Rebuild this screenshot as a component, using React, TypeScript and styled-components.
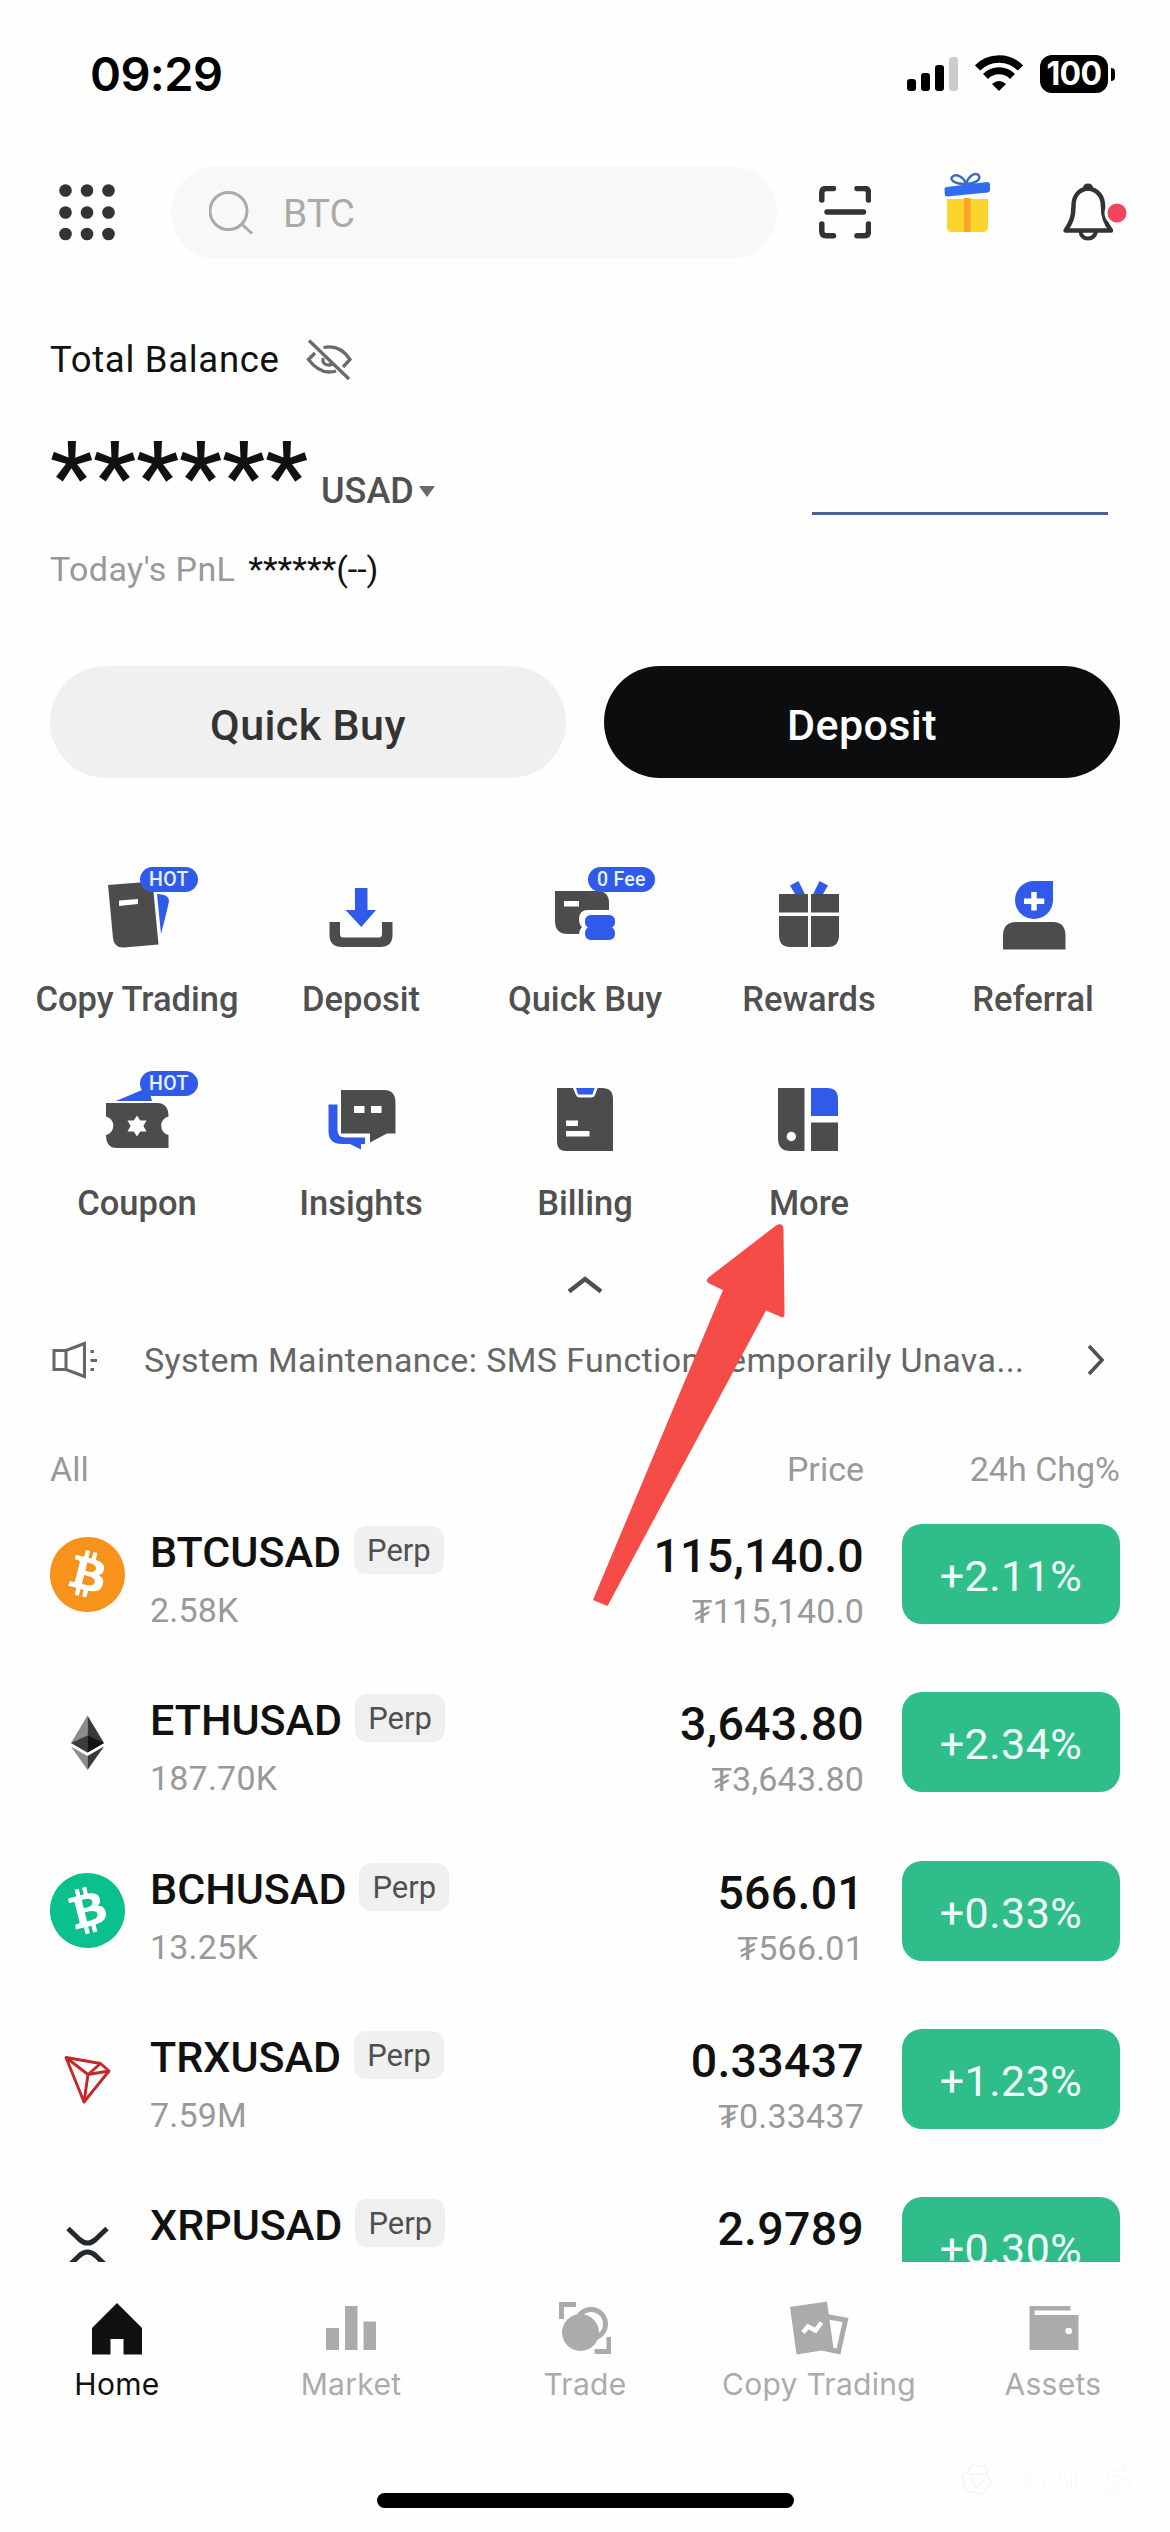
import React from "react";
import styled, { createGlobalStyle } from "styled-components";
import { SiBitcoin } from "react-icons/si";

const DARK = "#4c4c4c";
const BLUE = "#305ae9";
const MUTED = "#ababab";

const GlobalStyle = createGlobalStyle`
  * { box-sizing: border-box; }
  body {
    margin: 0;
    background: #fefefe;
    font-family: Roboto, "Liberation Sans", sans-serif;
    color: #111;
  }
  svg { display: block; flex: none; }
`;

const Screen = styled.div`
  position: relative;
  width: 1170px;
  height: 2532px;
  overflow: hidden;
  display: flex;
  flex-direction: column;
  background: #fefefe;
`;

/* ---------- status bar ---------- */
const StatusBar = styled.div`
  flex: none;
  height: 166px;
  padding: 44px 55px 62px 90px;
  display: flex;
  align-items: center;
  justify-content: space-between;
  font-family: Inter, "Liberation Sans", sans-serif;
`;
const Clock = styled.span`
  font-size: 47px;
  font-weight: 600;
  line-height: 60px;
  letter-spacing: -0.6px;
  color: #000;
`;
const StatusIcons = styled.div`
  display: flex;
  align-items: center;
`;
const WifiSlot = styled.div`
  margin: 0 17px;
`;
const Battery = styled.div`
  width: 68px;
  height: 38px;
  border-radius: 12px;
  background: #000;
  color: #fff;
  font-size: 32px;
  font-weight: 700;
  line-height: 38px;
  letter-spacing: -0.6px;
  text-align: center;
`;
const BatteryNub = styled.div`
  width: 4px;
  height: 13px;
  margin-left: 3px;
  border-radius: 0 4px 4px 0;
  background: #000;
`;

/* ---------- header ---------- */
const Header = styled.header`
  flex: none;
  height: 93px;
  padding-left: 59px;
  display: flex;
  align-items: center;
`;
const SearchBox = styled.div`
  width: 606px;
  height: 93px;
  margin: 0 42px 0 56px;
  padding: 2px 0 0 38px;
  border-radius: 47px;
  background: #f8f8f8;
  display: flex;
  align-items: center;
  gap: 28px;
  font-size: 39px;
  color: #aaa;
`;
const GiftSlot = styled.div`
  margin: 0 68px 0 73px;
`;

/* ---------- balance ---------- */
const Balance = styled.section`
  flex: none;
  height: 407px;
  padding: 76px 62px 0 50px;
  display: flex;
  justify-content: space-between;
`;
const BalanceTitle = styled.div`
  height: 50px;
  display: flex;
  align-items: center;
  gap: 26px;
  font-size: 36.5px;
  line-height: 50px;
  letter-spacing: 0.7px;
`;
const Amount = styled.div`
  height: 90px;
  margin-top: 43px;
  display: flex;
  align-items: flex-start;
`;
const Masked = styled.span`
  padding-top: 4px;
  font-size: 97px;
  font-weight: 500;
  line-height: 90px;
`;
const Currency = styled.span`
  margin: 43px 0 0 13px;
  display: flex;
  align-items: center;
  gap: 5px;
  font-size: 36px;
  font-weight: 500;
  line-height: 40px;
  color: #505050;
`;
const Pnl = styled.div`
  margin-top: 29px;
  font-size: 34px;
  line-height: 44px;
`;
const PnlLabel = styled.span`
  margin-right: 13px;
  letter-spacing: 0.4px;
  color: #999;
`;
const Sparkline = styled.div`
  width: 296px;
  height: 3px;
  margin-top: 177px;
  background: #4a6595;
`;

const Actions = styled.div`
  flex: none;
  display: flex;
  gap: 38px;
  padding: 0 50px;
`;
const ActionButton = styled.button<{ $primary?: boolean }>`
  flex: 1;
  height: 112px;
  border: 0;
  border-radius: 56px;
  padding: 5px 0 0;
  font: 500 43px/60px Roboto, sans-serif;
  letter-spacing: 0.4px;
  color: ${(p) => (p.$primary ? "#fff" : "#333")};
  background: ${(p) => (p.$primary ? "#0b0d0e" : "#f0f0f0")};
`;

/* ---------- shortcuts ---------- */
const Shortcuts = styled.section`
  flex: none;
  margin-top: 82px;
  padding: 0 25px;
  display: grid;
  grid-template-columns: repeat(5, 224px);
  grid-auto-rows: 204px;
`;
const Tile = styled.div`
  position: relative;
  display: flex;
  flex-direction: column;
  align-items: center;
  gap: 19px;
  font-size: 34.5px;
  font-weight: 500;
  line-height: 40px;
  color: #505050;
  white-space: nowrap;
`;
const TileBadge = styled.span`
  position: absolute;
  left: 115px;
  top: 7px;
  height: 25px;
  padding: 0 9px;
  border-radius: 13px;
  background: ${BLUE};
  color: #e8f2ff;
  font-size: 19.5px;
  line-height: 26px;
  letter-spacing: 0.3px;
`;
const Collapse = styled.div`
  flex: none;
  height: 42px;
  padding-bottom: 8px;
  display: flex;
  align-items: center;
  justify-content: center;
`;

/* ---------- notice ---------- */
const Notice = styled.div`
  flex: none;
  height: 100px;
  padding: 0 66px 0 52px;
  display: flex;
  align-items: center;
`;
const NoticeText = styled.span`
  flex: 1;
  margin-left: 46px;
  font-size: 34px;
  line-height: 44px;
  letter-spacing: 0.4px;
  color: #666;
  white-space: nowrap;
`;

/* ---------- market list ---------- */
const Columns = styled.div`
  flex: none;
  height: 80px;
  padding: 37px 50px 0;
  display: grid;
  grid-template-columns: 1fr 300px 256px;
  font-size: 34px;
  line-height: 44px;
  color: #999;
`;
const RightCell = styled.span`
  text-align: right;
`;
const List = styled.section`
  flex: none;
  position: relative;
  height: 772px;
  overflow: hidden;
`;
const ListFade = styled.div`
  position: absolute;
  left: 0;
  right: 0;
  bottom: 0;
  height: 20px;
  background: linear-gradient(rgba(0, 0, 0, 0), rgba(0, 0, 0, 0.012));
`;
const Row = styled.div`
  height: 168.3px;
  padding: 0 50px;
  display: flex;
  align-items: center;
`;
const Coin = styled.div`
  width: 75px;
  height: 75px;
  flex: none;
  display: flex;
  align-items: center;
  justify-content: center;
`;
const CoinDisc = styled(Coin)<{ $color: string; $turn: number }>`
  border-radius: 50%;
  color: ${(p) => p.$color};
  background: radial-gradient(#fff 66%, transparent 67%);
  transform: rotate(${(p) => p.$turn}deg);
`;
const Pair = styled.div`
  flex: 1;
  margin-left: 25px;
  padding-top: 8px;
`;
const PairName = styled.div`
  height: 48px;
  display: flex;
  align-items: center;
  gap: 13px;
`;
const Symbol = styled.span`
  padding-top: 4px;
  font-size: 43px;
  font-weight: 500;
  line-height: 48px;
`;
const PerpTag = styled.span`
  height: 48px;
  padding: 0 13px;
  border-radius: 12px;
  background: #f0f0f0;
  font-size: 31px;
  line-height: 50px;
  color: #505050;
`;
const Secondary = styled.div`
  height: 40px;
  margin-top: 16px;
  font-size: 34px;
  line-height: 40px;
  letter-spacing: 0.2px;
  color: #999;
`;
const Quote = styled.div`
  padding-top: 12px;
  text-align: right;
`;
const Price = styled.div`
  font-size: 46.5px;
  font-weight: 500;
  line-height: 54px;
  letter-spacing: 0.25px;
  margin-bottom: -8px;
`;
const Change = styled.div`
  width: 218px;
  height: 100px;
  margin-left: 38px;
  padding-top: 5px;
  border-radius: 20px;
  background: #2fbd89;
  color: #f2fffa;
  font-size: 43px;
  line-height: 95px;
  letter-spacing: 0.5px;
  text-align: center;
`;

/* ---------- tab bar ---------- */
const TabBar = styled.nav`
  flex: none;
  height: 270px;
  position: relative;
  background: #fefefe;
`;
const Tabs = styled.div`
  height: 231px;
  padding-top: 33px;
  display: grid;
  grid-template-columns: repeat(5, 234px);
`;
const Tab = styled.div<{ $active?: boolean }>`
  display: flex;
  flex-direction: column;
  align-items: center;
  gap: 3px;
  font-family: Inter, "Liberation Sans", sans-serif;
  font-size: 30px;
  line-height: 40px;
  letter-spacing: 0.3px;
  color: ${(p) => (p.$active ? "#111" : MUTED)};
`;
const HomeIndicator = styled.div`
  width: 417px;
  height: 15px;
  margin: 0 auto;
  border-radius: 8px;
  background: #000;
`;
const Watermark = styled.div`
  position: absolute;
  right: 37px;
  bottom: 35px;
  display: flex;
  align-items: center;
  gap: 5px;
  font: 700 27.5px/36px "Noto Sans CJK SC", sans-serif;
  color: #fff;
  text-shadow: 0 0 1px #e6e6e6;
`;
const Pointer = styled.svg`
  position: absolute;
  left: 580px;
  top: 1215px;
`;

/* ---------- icons ---------- */
const shortcuts: { label: string; badge?: string; box: string; art: React.ReactNode }[] = [
  {
    label: "Copy Trading",
    badge: "HOT",
    box: "81 860 112 100",
    art: (
      <>
        <path d="M108 885L152.500 881.500L158.500 944.500L124 947.500Q114 948 113 938Z" fill={DARK} />
        <path d="M119 900.500L138 899V904L119 906Z" fill="#fff" />
        <path d="M157 894Q169 894 169 901Q168 907 161 934Z" fill={BLUE} />
      </>
    ),
  },
  {
    label: "Deposit",
    box: "305 860 112 100",
    art: (
      <>
        <path d="M355 888H367.500V910H376L361.300 927L345.500 910H355Z" fill={BLUE} />
        <path d="M329.500 922H340V934Q340 937.500 343 937.500H379Q382 937.500 382 934V922H392.500V935Q392.500 947 380 947H342Q329.500 947 329.500 935Z" fill={DARK} />
      </>
    ),
  },
  {
    label: "Quick Buy",
    badge: "0 Fee",
    box: "529 860 112 100",
    art: (
      <>
        <path d="M555 891H597Q609 891 609 903V910H588Q579 910 579 919Q579 924 582 927Q579 930 579 934H568Q555 934 555 921Z" fill={DARK} />
        <path d="M564 901H579V906.500H564Z" fill="#fff" />
        <path d="M591 915H609Q615 915 615 921.500Q615 926 612 927.500Q615 929 615 933.500Q615 940 609 940H591Q585 940 585 933.500Q585 929 588 927.500Q585 926 585 921.500Q585 915 591 915Z" fill={BLUE} />
      </>
    ),
  },
  {
    label: "Rewards",
    box: "753 860 112 100",
    art: (
      <>
        <path d="M790 885.500L798.500 881L804.800 894H795ZM828 885.500L819.500 881L813.200 894H823Z" fill={BLUE} />
        <path d="M779 894H808V912.500H779ZM811 894H839V912.500H811ZM779 916H808V947H790Q779 947 779 935ZM811 916H839V935Q839 947 828 947H811Z" fill={DARK} />
      </>
    ),
  },
  {
    label: "Referral",
    box: "977 860 112 100",
    art: (
      <>
        <path d="M1034 881H1053V900A19 19 0 1 1 1034 881Z" fill={BLUE} />
        <path d="M1034 892V910.500M1024 901.300H1044.300" stroke="#fff" strokeWidth="5.500" />
        <path d="M1003 949.500V936Q1003 922 1016 922H1053Q1065.500 922 1065.500 936V949.500Z" fill={DARK} />
      </>
    ),
  },
  {
    label: "Coupon",
    badge: "HOT",
    box: "81 1064 112 100",
    art: (
      <>
        <path d="M116 1101L142 1090L149 1090L152 1101Z" fill={BLUE} />
        <path d="M106 1103H157Q168.500 1103 168.500 1116.500A9.500 9.500 0 0 0 168.500 1135V1148H117Q106 1148 106 1135A9.500 9.500 0 0 0 106 1116.500Z" fill={DARK} />
        <path d="M137 1115.500L140.200 1120.500H146.500L143.400 1126L146.500 1131.500H140.200L137 1136.500L133.800 1131.500H127.500L130.600 1126L127.500 1120.500H133.800Z" fill="#fff" />
      </>
    ),
  },
  {
    label: "Insights",
    box: "305 1064 112 100",
    art: (
      <>
        <path d="M341 1090H384Q395.500 1090 395.500 1103V1133.500H387L370 1142.500V1133.500H341Z" fill={DARK} />
        <path d="M354 1106H364.500V1113H354ZM371 1106H381.500V1113H371Z" fill="#fff" />
        <path d="M328.500 1104.500H337.500V1130Q337.500 1137.500 345 1137.500H365V1144H361V1149.500L350 1144H342Q328.500 1144 328.500 1131Z" fill={BLUE} />
      </>
    ),
  },
  {
    label: "Billing",
    box: "529 1064 112 100",
    art: (
      <>
        <path d="M557 1088H602Q613 1088 613 1099V1151H566Q557 1151 557 1142Z" fill={DARK} />
        <path d="M572.500 1087H598L595 1095Q594 1097.500 591 1097.500H580Q577 1097.500 576 1095Z" fill="#fff" />
        <path d="M576 1088H594.500L592.500 1094.500H578Z" fill={BLUE} />
        <path d="M566 1120.500H578V1126H566ZM566 1131H589.500V1136.500H566Z" fill="#fff" />
      </>
    ),
  },
  {
    label: "More",
    box: "753 1064 112 100",
    art: (
      <>
        <path d="M778 1088H804.500V1151H790Q778 1151 778 1138Z" fill={DARK} />
        <circle cx="791.300" cy="1136.500" r="4.700" fill="#fff" />
        <path d="M811 1088H827Q838 1088 838 1099V1116H811Z" fill={BLUE} />
        <path d="M811 1122.500H838V1151H811Z" fill={DARK} />
      </>
    ),
  },
];

const EthLogo = () => (
  <svg width="75" height="75" viewBox="50 1704.500 75 75">
    <path d="M87.500 1715V1752L71 1742.500Z" fill="#8c8c8c" />
    <path d="M87.500 1715L104 1742.500L87.500 1752Z" fill="#393939" />
    <path d="M87.500 1735V1752L71 1742.500Z" fill="#3c3c3b" />
    <path d="M87.500 1735L104 1742.500L87.500 1752Z" fill="#141414" />
    <path d="M71 1746L87.500 1755.500V1769.500Z" fill="#8c8c8c" />
    <path d="M104 1746L87.500 1755.500V1769.500Z" fill="#393939" />
  </svg>
);
const TrxLogo = () => (
  <svg width="75" height="75" viewBox="50 2041 75 75" fill="none" stroke="#c4282a" strokeWidth="2.900" strokeLinejoin="round">
    <path d="M66 2056.500L100.500 2062.500L109 2070L84 2101Z" />
    <path d="M66 2056.500L88 2073.500L84 2101M88 2073.500L109 2070M88 2073.500L100.500 2062.500" />
  </svg>
);
const XrpLogo = () => (
  <svg width="75" height="75" viewBox="50 2209.500 75 75" fill="none" stroke="#23292f" strokeWidth="5">
    <path d="M68 2228L79.500 2239Q87.500 2246 95.500 2239L107 2228" />
    <path d="M68 2266L79.500 2255Q87.500 2248 95.500 2255L107 2266" />
  </svg>
);

interface Market {
  symbol: string;
  volume?: string;
  price: string;
  sub?: string;
  change: string;
  logo: React.ReactNode;
}
const markets: Market[] = [
  { symbol: "BTCUSAD", volume: "2.58K", price: "115,140.0", sub: "₮115,140.0", change: "+2.11%", logo: <CoinDisc $color="#f7931a" $turn={0}><SiBitcoin size={75} /></CoinDisc> },
  { symbol: "ETHUSAD", volume: "187.70K", price: "3,643.80", sub: "₮3,643.80", change: "+2.34%", logo: <Coin><EthLogo /></Coin> },
  { symbol: "BCHUSAD", volume: "13.25K", price: "566.01", sub: "₮566.01", change: "+0.33%", logo: <CoinDisc $color="#0ac18e" $turn={-28}><SiBitcoin size={75} /></CoinDisc> },
  { symbol: "TRXUSAD", volume: "7.59M", price: "0.33437", sub: "₮0.33437", change: "+1.23%", logo: <Coin><TrxLogo /></Coin> },
  { symbol: "XRPUSAD", price: "2.9789", change: "+0.30%", logo: <Coin><XrpLogo /></Coin> },
];

const tabs = [
  { label: "Home", x: 87, art: <path d="M117 2303L142 2328V2354.500H123.500V2339H110.500V2354.500H92V2328Z" fill="#111" /> },
  { label: "Market", x: 321, art: <path d="M326 2328H339V2350H326ZM345 2306H357.500V2350H345ZM363.500 2321.500H376V2350H363.500Z" fill={MUTED} /> },
  {
    label: "Trade",
    x: 555,
    art: (
      <>
        <path d="M559 2302H576V2307H564V2319H559ZM611 2354H594.500V2349H606.500V2337H611Z" fill={MUTED} />
        <circle cx="591" cy="2324" r="14.500" fill="none" stroke={MUTED} strokeWidth="5" />
        <circle cx="580.500" cy="2332.500" r="18.500" fill={MUTED} />
      </>
    ),
  },
  {
    label: "Copy Trading",
    x: 789,
    art: (
      <>
        <path d="M826 2316.500L845.500 2320L838.500 2351.500L822 2348" fill="none" stroke={MUTED} strokeWidth="5" />
        <path d="M790 2307L827 2301.500L833.500 2348.500L822 2350.500L796.500 2354.500Z" fill={MUTED} />
        <path d="M803 2332.500L808 2326.500L815.500 2330.500L821.500 2322.500" fill="none" stroke="#fefefe" strokeWidth="4.500" />
      </>
    ),
  },
  {
    label: "Assets",
    x: 1023,
    art: (
      <>
        <path d="M1029.500 2306H1070.500V2310.500H1034.500V2315H1078.500V2350H1029.500Z" fill={MUTED} />
        <circle cx="1068.700" cy="2331" r="3.300" fill="#fff" />
      </>
    ),
  },
];

export default function App() {
  return (
    <>
      <GlobalStyle />
      <Screen>
        <StatusBar>
          <Clock>09:29</Clock>
          <StatusIcons>
            <svg width="51" height="38" viewBox="907 55 51 38">
              <rect x="907" y="79" width="9" height="12" rx="3" />
              <rect x="921" y="73" width="9" height="18" rx="3" />
              <rect x="935" y="65" width="9" height="26" rx="3" />
              <rect x="949" y="57" width="9" height="34" rx="3" fill="#ccc" />
            </svg>
            <WifiSlot>
              <svg width="48" height="38" viewBox="975 55 48 38" fill="none" stroke="#000">
                <path d="M977.500 68A30 30 0 0 1 1020.500 68" strokeWidth="7.500" />
                <path d="M985.500 76.500A19 19 0 0 1 1012.500 76.500" strokeWidth="7" />
                <path d="M992 84Q999 78 1006 84L999 91Z" fill="#000" stroke="none" />
              </svg>
            </WifiSlot>
            <Battery>100</Battery>
            <BatteryNub />
          </StatusIcons>
        </StatusBar>

        <Header>
          <svg width="56" height="57" viewBox="0 0 56 57" fill="#333">
            {[6.5, 28.5, 50].map((y) => [6.5, 28, 49.5].map((x) => <circle key={`${x}-${y}`} cx={x} cy={y} r="6.300" />))}
          </svg>
          <SearchBox>
            <svg width="46" height="46" viewBox="209 189 46 46" fill="none" stroke="#aaa" strokeWidth="3">
              <circle cx="228.500" cy="209" r="18.500" />
              <path d="M241.500 222L252 231.500" />
            </svg>
            BTC
          </SearchBox>
          <svg width="52" height="53" viewBox="819 186 52 53" fill="none" stroke="#333" strokeWidth="5.500" strokeLinecap="round">
            <path d="M821.800 200V193Q821.800 188.500 826 188.500H833.500M857 188.500H864.500Q868.500 188.500 868.500 193V200M868.500 224V231Q868.500 235.800 864.500 235.800H857M833.500 235.800H826Q821.800 235.800 821.800 231V224M827 212H863.500" />
          </svg>
          <GiftSlot>
            <svg width="50" height="93" viewBox="944 166 50 93">
              <path d="M966 184C954 184 950 180 952 177C956 173 964 177 966 184C968 177 974 172 978.500 175C982 180 974 184 966 184Z" fill="none" stroke="#3c6fb8" strokeWidth="2.400" />
              <path d="M944.500 189Q944.500 187 947 187L987 182Q989.500 182 990 184V190Q990 192 987.500 192.500L947 196.500Q944.800 196.500 944.800 194Z" fill="#326af0" />
              <path d="M947 199H988V227Q988 232 983 232H952Q947 232 947 227Z" fill="#fcd42c" />
              <path d="M964 198H970.500V232H964Z" fill="#f9a62b" />
            </svg>
          </GiftSlot>
          <svg width="66" height="93" viewBox="1062 166 66 93">
            <path d="M1088 188.500C1078 189.500 1073.500 197 1073.500 206C1073.500 217 1071 223 1065.500 230.500H1111C1105.500 223 1103 217 1103 206C1103 197 1098 189.500 1088 188.500Z" fill="none" stroke="#333" strokeWidth="4.500" strokeLinejoin="round" />
            <path d="M1083 188.500Q1083 183.500 1088 183.500Q1093 183.500 1093 188.500Z" fill="#333" />
            <path d="M1080.500 231.500Q1081.500 238.500 1088 238.500Q1094.500 238.500 1096 231.500" fill="none" stroke="#333" strokeWidth="4" />
            <circle cx="1117" cy="213" r="12.500" fill="#fefefe" />
            <circle cx="1117" cy="213" r="9.500" fill="#f3435d" />
          </svg>
        </Header>

        <Balance>
          <div>
            <BalanceTitle>
              Total Balance
              <svg width="46" height="44" viewBox="306 337 46 44" fill="none" stroke="#6a6a6a" strokeWidth="3.300">
                <path d="M309 339.500L349 378" />
                <path d="M315 352L308.500 358.500Q318 371 329 371Q333 371 336 370" />
                <path d="M323.500 346.500Q340 343 350 358.500L343 366" />
                <path d="M323 357Q322 364 329 364Q332 364 333 362" />
              </svg>
            </BalanceTitle>
            <Amount>
              <Masked>******</Masked>
              <Currency>
                USAD
                <svg width="16" height="11" viewBox="0 0 16 11">
                  <path d="M0 0H16L8 11Z" fill="#6a6a6a" />
                </svg>
              </Currency>
            </Amount>
            <Pnl>
              <PnlLabel>Today's PnL</PnlLabel>
              <span>******(--)</span>
            </Pnl>
          </div>
          <Sparkline />
        </Balance>

        <Actions>
          <ActionButton>Quick Buy</ActionButton>
          <ActionButton $primary>Deposit</ActionButton>
        </Actions>

        <Shortcuts>
          {shortcuts.map((s) => (
            <Tile key={s.label}>
              <svg width="112" height="100" viewBox={s.box}>{s.art}</svg>
              {s.label}
              {s.badge && <TileBadge>{s.badge}</TileBadge>}
            </Tile>
          ))}
        </Shortcuts>

        <Collapse>
          <svg width="36" height="18" viewBox="0 0 36 18">
            <path d="M2 15.500L18 3L34 15.500" fill="none" stroke="#505050" strokeWidth="4.500" />
          </svg>
        </Collapse>

        <Notice>
          <svg width="46" height="38" viewBox="52 1341 46 38" fill="none" stroke="#666" strokeWidth="3">
            <path d="M54 1350.500H66L84.500 1343.500V1376.500L66 1369.500H54ZM66 1350.500V1369.500M90.500 1351.500H94M90.500 1360.500H97M90.500 1369.500H94" />
          </svg>
          <NoticeText>System Maintenance: SMS Function Temporarily Unava...</NoticeText>
          <svg width="17" height="32" viewBox="0 0 17 32">
            <path d="M2 2L15 16L2 30" fill="none" stroke="#505050" strokeWidth="3.500" />
          </svg>
        </Notice>

        <Columns>
          <span>All</span>
          <RightCell>Price</RightCell>
          <RightCell>24h Chg%</RightCell>
        </Columns>
        <List>
          {markets.map((m) => (
            <Row key={m.symbol}>
              {m.logo}
              <Pair>
                <PairName>
                  <Symbol>{m.symbol}</Symbol>
                  <PerpTag>Perp</PerpTag>
                </PairName>
                <Secondary>{m.volume}</Secondary>
              </Pair>
              <Quote>
                <Price>{m.price}</Price>
                <Secondary>{m.sub}</Secondary>
              </Quote>
              <Change>{m.change}</Change>
            </Row>
          ))}
          <ListFade />
        </List>

        <TabBar>
          <Tabs>
            {tabs.map((t, i) => (
              <Tab key={t.label} $active={i === 0}>
                <svg width="60" height="66" viewBox={`${t.x} 2295 60 66`}>{t.art}</svg>
                {t.label}
              </Tab>
            ))}
          </Tabs>
          <HomeIndicator />
          <Watermark>
            <svg width="30" height="32" viewBox="0 0 30 32" fill="none" stroke="#f0f0f0" strokeWidth="1">
              <path d="M9 4Q12 0 16 3H23Q28 5 26 10L29 18Q31 22 26 24L22 30Q18 33 14 29L5 28Q1 25 4 20L1 14Q1 9 7 9ZM8 11H26L16 25Z" />
            </svg>
            千问AI生成
          </Watermark>
        </TabBar>

        <Pointer width="215" height="400" viewBox="580 1215 215 400">
          <path d="M776 1225.500Q783 1222 783.500 1229L784.500 1315Q784 1319 780 1316.500L766 1310.500L607.500 1606L593 1600L723 1290L709 1283.500Q705 1281 708.500 1277.500Z" fill="#f64c47" />
        </Pointer>
      </Screen>
    </>
  );
}
